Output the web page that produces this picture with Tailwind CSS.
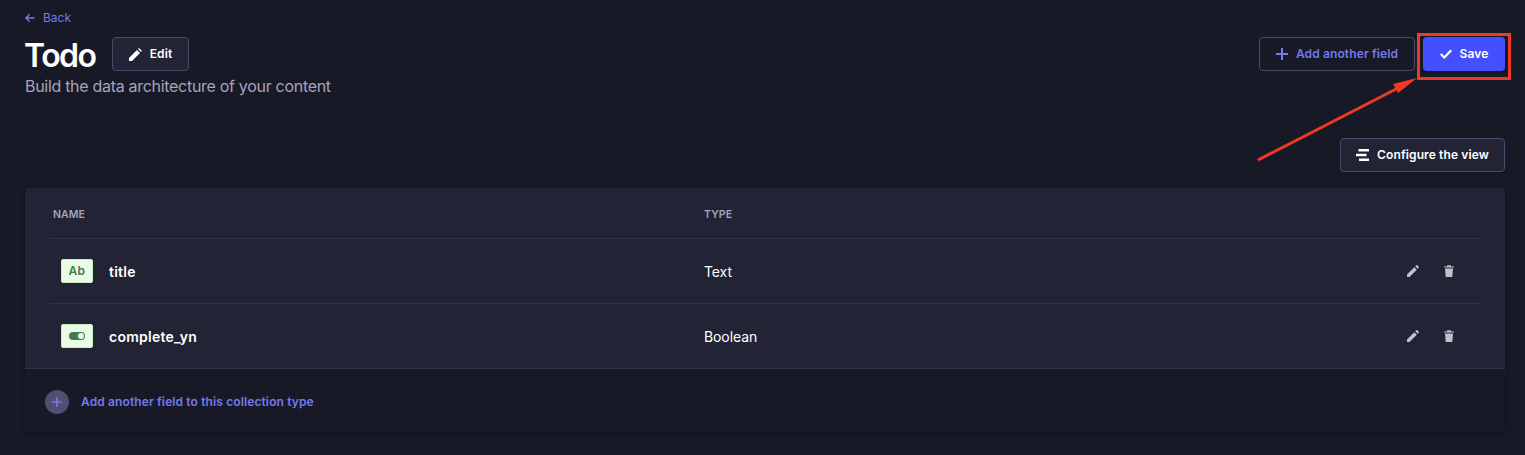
<!DOCTYPE html>
<html lang="en">
<head>
  <meta charset="UTF-8">
  <title>Todo</title>
  <script src="https://cdn.jsdelivr.net/npm/@tailwindcss/browser@4"></script>
</head>
<body class="bg-[#181927] text-white font-['Inter',sans-serif] h-[455px] overflow-hidden relative">

  <div class="pl-[25px] pr-[20px] pt-[11px]">
    <a class="flex items-center gap-[8px] h-[14px] text-[#7678ed] text-[12px] leading-[14px]">
      <svg width="10" height="10" viewBox="0 0 10 10" fill="none" stroke="#7678ed" stroke-width="1.3"><path d="M9.500 5H1M4.600 1.200 .9 5l3.700 3.800"/></svg>
      Back
    </a>

    <div class="flex justify-between mt-[12px]">
      <div>
        <div class="flex items-center gap-[16px] h-[34px]">
          <h1 class="w-[71px] pt-[4px] -translate-x-px text-[32px] leading-[34px] font-semibold tracking-[-1.5px]">Todo</h1>
          <button class="flex items-center justify-center gap-[8px] w-[77px] h-[34px] bg-[#222335] border border-[#4a4a6a] rounded text-[12px] font-semibold tracking-[0.12px]">
            <svg width="13" height="13" viewBox="0 0 13 13" fill="#fff"><path d="M0 13V10L8 2l3 3-8 8zM9 1l1-1 3 3-1 1z"/></svg>
            Edit
          </button>
        </div>
        <p class="text-[16px] leading-[24px] text-[#a5a5ba] mt-[3px] tracking-[-0.3px]">Build the data architecture of your content</p>
      </div>
      <div class="flex gap-[8px]">
        <button class="flex items-center justify-center gap-[8px] w-[156px] h-[34px] border border-[#4a4a6a] rounded text-[12px] font-semibold text-[#7678ed] tracking-[0.12px]">
          <svg width="12" height="12" viewBox="0 0 12 12" fill="none" stroke="#7678ed" stroke-width="2"><path d="M6 0v12M0 6h12"/></svg>
          Add another field
        </button>
        <button class="flex items-center justify-center gap-[8px] w-[82px] h-[34px] bg-[#4450ff] rounded text-[12px] font-semibold tracking-[0.12px]">
          <svg width="12" height="10" viewBox="0 0 12 10" fill="none" stroke="#fff" stroke-width="2"><path d="M.8 5l3.500 3.500L11.200 1.200"/></svg>
          Save
        </button>
      </div>
    </div>

    <div class="flex justify-end mt-[40px]">
      <button class="flex items-center justify-center gap-[8px] w-[165px] h-[34px] bg-[#222335] border border-[#4a4a6a] rounded text-[12px] font-semibold tracking-[0.12px]">
        <svg width="13" height="12" viewBox="0 0 13 12" fill="#fff"><path d="M2.500 0H13v2.500H2.500zM0 4.800h10.500v2.500H0zM3 9.500h10V12H3z"/></svg>
        Configure the view
      </button>
    </div>

    <div class="mt-[16px] w-[1480px] h-[245px] bg-[#222335] rounded shadow-[0_1px_4px_rgba(3,3,5,0.35)] overflow-hidden">
      <div class="mx-[24px] h-[51px] pt-[3px] flex items-center border-b border-[#32324d] pl-[4px] text-[10.5px] font-semibold text-[#a5a5ba] tracking-[0.1px]">
        <span class="w-[651px]">NAME</span>
        <span>TYPE</span>
      </div>

      <div class="mx-[24px] h-[65px] flex items-center border-b border-[#32324d] pl-[12px]">
        <div class="w-[48px] flex-none">
          <span class="flex items-center justify-center w-[32px] h-[24px] bg-[#eafbe7] border border-[#c6f0c2] rounded-[2px] text-[#457a4f] text-[12px] font-semibold tracking-[0.3px]">Ab</span>
        </div>
        <span class="w-[595px] text-[14px] font-semibold tracking-[0.25px]">title</span>
        <span class="text-[14px] tracking-[-0.1px]">Text</span>
        <div class="ml-auto mr-[27px] flex items-center gap-[25px]">
          <svg width="12" height="12" viewBox="0 0 12 12" fill="#c0c0cf"><path d="M0 12V9.500L7.300 2.200 9.800 4.700 2.500 12zM8.200 1.300 9.300.2a.7.7 0 0 1 1 0l1.500 1.500a.7.7 0 0 1 0 1L10.700 3.800z"/></svg>
          <svg width="10" height="12" viewBox="0 0 10 12" fill="#c0c0cf"><path d="M0 1.400h3V.3h4v1.100h3v1H0zM1 3.400h8L8.300 12H1.700z"/></svg>
        </div>
      </div>

      <div class="h-[65px] flex items-center border-b border-[#32324d] pl-[36px] pr-[24px]">
        <div class="w-[48px] flex-none">
          <span class="flex items-center justify-center w-[32px] h-[24px] bg-[#eafbe7] border border-[#c6f0c2] rounded-[2px]">
            <svg width="16" height="8" viewBox="0 0 16 8"><rect width="16" height="8" rx="4" fill="#457a4f"/><circle cx="12" cy="4" r="3" fill="#eafbe7"/></svg>
          </span>
        </div>
        <span class="w-[595px] text-[14px] font-semibold tracking-[0.25px]">complete_yn</span>
        <span class="text-[14px] tracking-[-0.1px]">Boolean</span>
        <div class="ml-auto mr-[27px] flex items-center gap-[25px]">
          <svg width="12" height="12" viewBox="0 0 12 12" fill="#c0c0cf"><path d="M0 12V9.500L7.300 2.200 9.800 4.700 2.500 12zM8.200 1.300 9.300.2a.7.7 0 0 1 1 0l1.500 1.500a.7.7 0 0 1 0 1L10.700 3.800z"/></svg>
          <svg width="10" height="12" viewBox="0 0 10 12" fill="#c0c0cf"><path d="M0 1.400h3V.3h4v1.100h3v1H0zM1 3.400h8L8.300 12H1.700z"/></svg>
        </div>
      </div>

      <div class="h-[64px] pt-[2px] bg-[#181927] flex items-center gap-[12px] pl-[20px]">
        <span class="flex items-center justify-center w-[24px] h-[24px] rounded-full bg-[#4f4f72]">
          <svg width="10" height="10" viewBox="0 0 10 10" fill="none" stroke="#7678ed" stroke-width="1.6"><path d="M5 0v10M0 5h10"/></svg>
        </span>
        <span class="text-[12px] font-semibold text-[#7678ed] tracking-[0.12px]">Add another field to this collection type</span>
      </div>
    </div>
  </div>

  <!-- annotation over the page -->
  <div class="absolute left-[1417px] top-[33px] w-[94px] h-[47px] border-[3px] border-[#ee3a24]"></div>
  <svg class="absolute left-0 top-0" width="1525" height="455" fill="none">
    <path d="M1258 160 1400 87" stroke="#ee3a24" stroke-width="3"/>
    <path d="M1417 78 1398 93 1393 84z" fill="#ee3a24"/>
  </svg>
</body>
</html>
